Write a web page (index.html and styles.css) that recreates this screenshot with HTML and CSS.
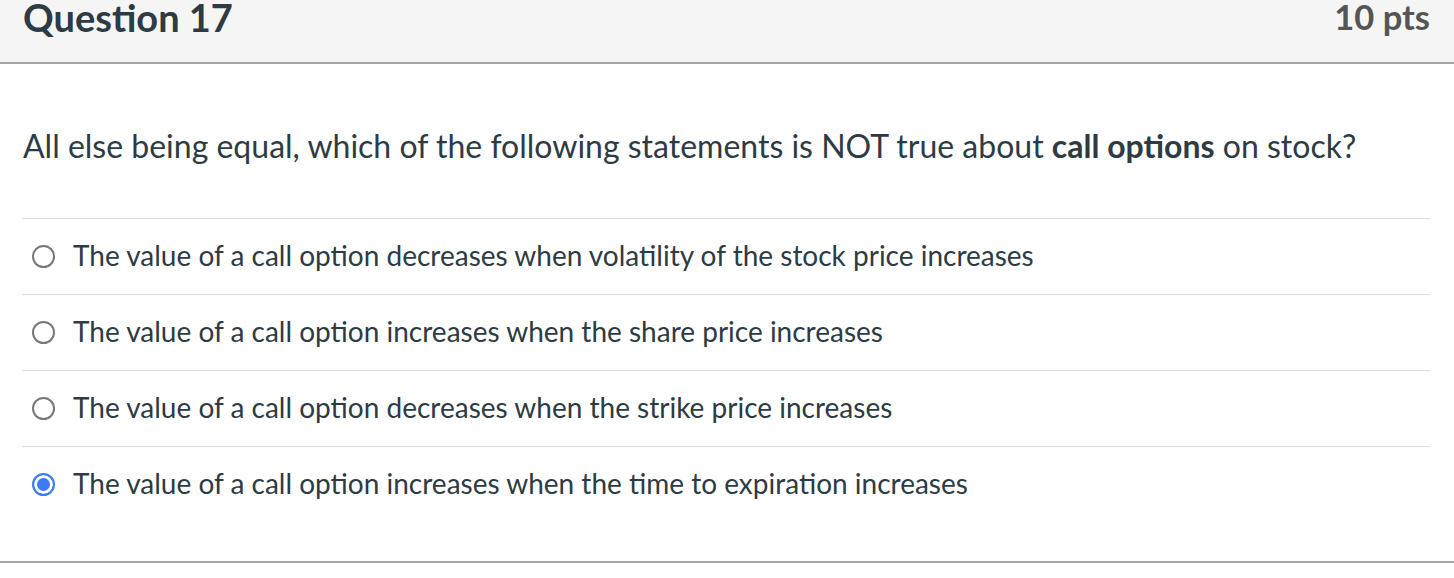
FILE: index.html
```html
<!DOCTYPE html>
<html>
<head>
<meta charset="utf-8">
<link rel="stylesheet" href="styles.css">
</head>
<body>
<div class="question">
  <div class="q-header">
    <h2 class="q-title">Question 17</h2>
    <span class="q-pts">10 pts</span>
  </div>
  <div class="q-body">
    <p class="q-text">All else being equal, which of the following statements is NOT true about <strong>call options</strong> on stock?</p>
    <div class="answers">
      <label class="answer"><span class="radio"></span><span class="a-text">The value of a call option decreases when volatility of the stock price increases</span></label>
      <label class="answer"><span class="radio"></span><span class="a-text">The value of a call option increases when the share price increases</span></label>
      <label class="answer"><span class="radio"></span><span class="a-text">The value of a call option decreases when the strike price increases</span></label>
      <label class="answer"><span class="radio checked"></span><span class="a-text">The value of a call option increases when the time to expiration increases</span></label>
    </div>
  </div>
</div>
</body>
</html>
```

FILE: styles.css
```css
html, body {
  margin: 0;
  padding: 0;
  background: #ffffff;
}
body {
  font-family: Lato, "Open Sans", sans-serif;
  color: #2d3b45;
}
.question {
  border-bottom: 2px solid #a5a5a5;
}
.q-header {
  display: flex;
  justify-content: space-between;
  align-items: flex-start;
  height: 62px;
  padding: 0 24px 0 23px;
  background: #f5f5f5;
  border-bottom: 2px solid #a5a5a5;
}
.q-title {
  margin: 0;
  font-size: 38px;
  line-height: 34px;
  font-weight: 700;
  color: #2d3b45;
}
.q-pts {
  font-size: 34.5px;
  line-height: 34px;
  font-weight: 700;
  color: #555555;
}
.q-body {
  padding: 61px 24px 39px 22px;
}
.q-text {
  margin: 0 0 51px 1px;
  font-size: 32px;
  line-height: 42px;
}
.q-text strong {
  font-weight: 700;
}
.answer {
  display: flex;
  align-items: center;
  gap: 18px;
  height: 75px;
  padding-left: 10px;
  border-top: 1px solid #dcdcdc;
}
.radio {
  box-sizing: border-box;
  width: 23px;
  height: 23px;
  border: 2px solid #777777;
  border-radius: 50%;
  flex: none;
}
.radio.checked {
  border: 2px solid #3c7cf4;
  background: #3c7cf4;
  box-shadow: inset 0 0 0 3px #ffffff;
}
.a-text {
  font-size: 28px;
  line-height: 34px;
  padding-bottom: 4px;
}
```
